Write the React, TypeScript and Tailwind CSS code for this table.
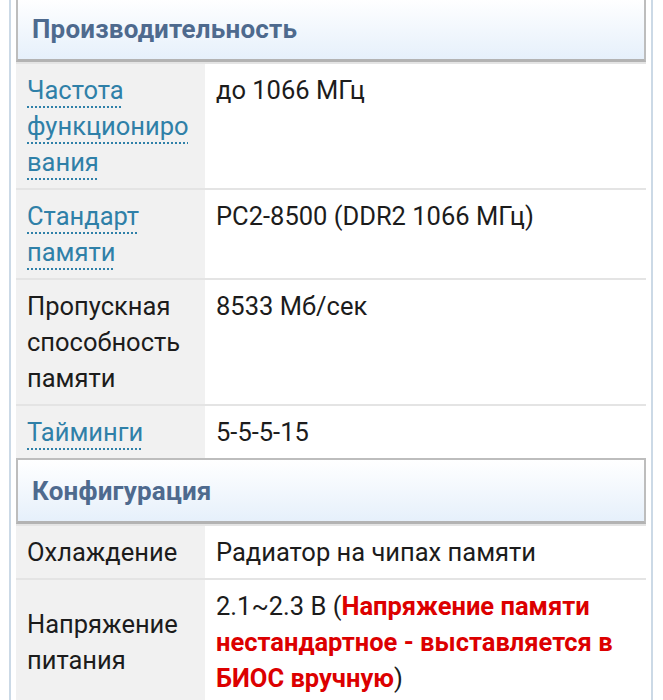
import React from "react";

type Row = {
  label: string;
  link?: boolean;
  value: React.ReactNode;
};

const PERF: Row[] = [
  { label: "Частота функционирования", link: true, value: "до 1066 МГц" },
  { label: "Стандарт памяти", link: true, value: "PC2-8500 (DDR2 1066 МГц)" },
  { label: "Пропускная способность памяти", value: "8533 Мб/сек" },
  { label: "Тайминги", link: true, value: "5-5-5-15" },
];

const CONFIG: Row[] = [
  { label: "Охлаждение", value: "Радиатор на чипах памяти" },
  {
    label: "Напряжение питания",
    value: (
      <>
        2.1~2.3 В (
        <span className="font-bold text-[#dc0000]">
          Напряжение памяти нестандартное - выставляется в БИОС вручную
        </span>
        )
      </>
    ),
  },
];

function SectionHeader({ title }: { title: string }) {
  return (
    <div className="h-[66px] flex items-center pl-[14px] border-2 border-[#bdbdbd] border-b-[3px] border-b-[#b3b3b3] bg-gradient-to-b from-white to-[#e6f0fb]">
      <span className="text-[26px] font-bold text-[#4e6a8e] tracking-[0.2px]">{title}</span>
    </div>
  );
}

function SpecRow({ row }: { row: Row }) {
  return (
    <div className="flex border-t-2 border-[#e4e4e4]">
      <div className="w-[189px] shrink-0 flex flex-col justify-center bg-[#f1f1f1] pl-[11px] pr-[10px] py-[8px]">
        <div className="break-words">
          {row.link ? (
            <span className="text-[#2f80a8] underline decoration-dotted decoration-[2px] underline-offset-[7px] decoration-[#2f80a8]">
              {row.label}
            </span>
          ) : (
            <span>{row.label}</span>
          )}
        </div>
      </div>
      <div className="flex-1 bg-white pl-[11px] pr-[6px] py-[8px]">{row.value}</div>
    </div>
  );
}

export default function App() {
  return (
    <div
      className="w-[663px] h-[700px] overflow-hidden bg-white text-[25.5px] leading-[36px] text-[#1c1c1c]"
      style={{ fontFamily: "Roboto, 'Noto Sans', sans-serif" }}
    >
      <div className="ml-[9px] mr-[10px] -mt-[4px] border-x-2 border-[#cbd9e6] px-[5px] pb-[40px]">
        <SectionHeader title="Производительность" />
        {PERF.map((r) => (
          <SpecRow key={r.label} row={r} />
        ))}
        <SectionHeader title="Конфигурация" />
        {CONFIG.map((r) => (
          <SpecRow key={r.label} row={r} />
        ))}
        <div className="flex border-t-2 border-[#e4e4e4] h-[40px]">
          <div className="w-[189px] bg-[#f1f1f1]" />
          <div className="flex-1" />
        </div>
      </div>
    </div>
  );
}
